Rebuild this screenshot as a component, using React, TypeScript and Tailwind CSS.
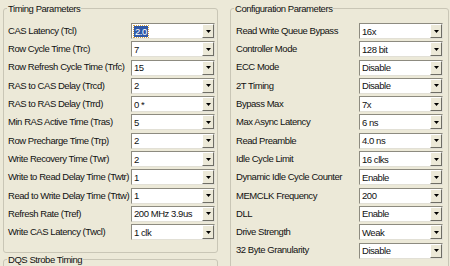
import React from 'react';

const timing: [string, string][] = [
  ['CAS Latency (Tcl)', '2.0'],
  ['Row Cycle Time (Trc)', '7'],
  ['Row Refresh Cycle Time (Trfc)', '15'],
  ['RAS to CAS Delay (Trcd)', '2'],
  ['RAS to RAS Delay (Trrd)', '0 *'],
  ['Min RAS Active Time (Tras)', '5'],
  ['Row Precharge Time (Trp)', '2'],
  ['Write Recovery Time (Twr)', '2'],
  ['Write to Read Delay Time (Twtr)', '1'],
  ['Read to Write Delay Time (Trtw)', '1'],
  ['Refresh Rate (Tref)', '200 MHz 3.9us'],
  ['Write CAS Latency (Twcl)', '1 clk'],
];

const config: [string, string][] = [
  ['Read Write Queue Bypass', '16x'],
  ['Controller Mode', '128 bit'],
  ['ECC Mode', 'Disable'],
  ['2T Timing', 'Disable'],
  ['Bypass Max', '7x'],
  ['Max Async Latency', '6 ns'],
  ['Read Preamble', '4.0 ns'],
  ['Idle Cycle Limit', '16 clks'],
  ['Dynamic Idle Cycle Counter', 'Enable'],
  ['MEMCLK Frequency', '200'],
  ['DLL', 'Enable'],
  ['Drive Strength', 'Weak'],
  ['32 Byte Granularity', 'Disable'],
];

function Combo({ value, focused }: { value: string; focused?: boolean }) {
  return (
    <div className="w-[84px] h-4 flex bg-white border border-t-[#8d8b80] border-l-[#8d8b80] border-b-[#e2e0d6] border-r-[#e2e0d6]">
      <div className="flex-1 flex items-center pl-[2px] min-w-0 whitespace-nowrap">
        {focused ? (
          <span className="bg-[#2f58a8] text-white leading-[11px] px-[1px] outline outline-1 outline-dotted outline-[#d0a040]">{value}</span>
        ) : (
          <span className="leading-[11px]">{value}</span>
        )}
      </div>
      <div className="w-[12px] h-full flex items-center justify-center bg-[#ece9d8] border border-t-white border-l-white border-b-[#6f6e66] border-r-[#6f6e66]">
        <svg width="5" height="3" viewBox="0 0 5 3">
          <path d="M0 0h5L2.5 3z" fill="#000" />
        </svg>
      </div>
    </div>
  );
}

function Group({ title, className, children }: { title: string; className: string; children?: React.ReactNode }) {
  return (
    <fieldset className={`border border-[#c9c6b6] rounded-[3px] ${className}`}>
      <legend className="ml-[3px] px-[1px] leading-[11px]">{title}</legend>
      {children}
    </fieldset>
  );
}

export default function App() {
  return (
    <div
      className="w-[450px] h-[266px] overflow-hidden bg-[#ece9d8] text-[#111] text-[9.5px] tracking-[-0.45px]"
      style={{ fontFamily: '"Liberation Sans", Arial, sans-serif' }}
    >
      <div className="flex pl-[3px] pt-[3px] gap-[12px]">
        <div className="flex flex-col gap-[1px]">
          <Group title="Timing Parameters" className="w-[215px] h-[250px]">
            <div className="flex flex-col gap-[2.3px] pt-[9px] pl-[4px]">
              {timing.map(([label, value], i) => (
                <div key={label} className="flex items-center h-4">
                  <span className="w-[123px] whitespace-nowrap">{label}</span>
                  <Combo value={value} focused={i === 0} />
                </div>
              ))}
            </div>
          </Group>
          <Group title="DQS Strobe Timing" className="w-[215px] h-[40px]" />
        </div>
        <Group title="Configuration Parameters" className="w-[219px] h-[290px]">
          <div className="flex flex-col gap-[2.3px] pt-[9px] pl-[5px]">
            {config.map(([label, value]) => (
              <div key={label} className="flex items-center h-4">
                <span className="w-[123px] whitespace-nowrap">{label}</span>
                <Combo value={value} />
              </div>
            ))}
          </div>
        </Group>
      </div>
    </div>
  );
}
